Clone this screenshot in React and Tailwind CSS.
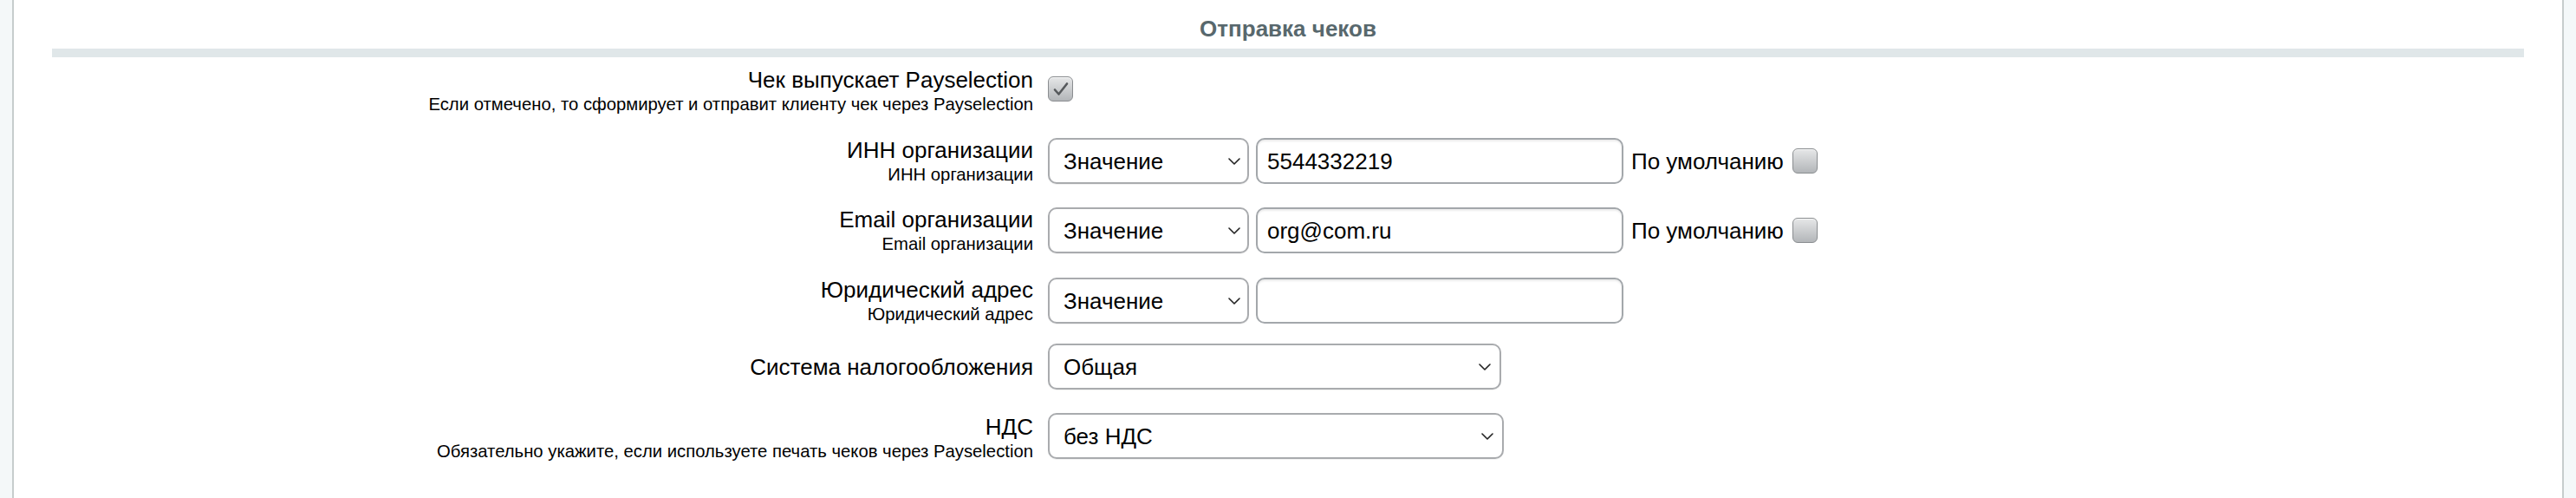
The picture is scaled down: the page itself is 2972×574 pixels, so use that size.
import React from 'react';

const font = { fontFamily: '"Liberation Sans", Arial, Helvetica, sans-serif' };

function Chevron({ className }) {
  return (
    <svg viewBox="0 0 14 8" className={className} fill="none" stroke="#222" strokeWidth="1.6" strokeLinecap="round" strokeLinejoin="round">
      <path d="M1 1l6 6 6-6" />
    </svg>
  );
}

function Checkbox({ checked }) {
  return (
    <div className="w-[29px] h-[29px] rounded-[6px] border border-[#8a8d90] bg-gradient-to-b from-[#e6e7e8] to-[#b3b6b9] shadow-[inset_0_1px_0_rgba(255,255,255,0.7)] flex items-center justify-center">
      {checked && (
        <svg viewBox="0 0 24 24" className="w-[24px] h-[24px]" fill="none" stroke="#56595c" strokeWidth="2.6" strokeLinecap="round" strokeLinejoin="round">
          <path d="M5 12.5l4.5 5L19 5.5" />
        </svg>
      )}
    </div>
  );
}

function FakeSelect({ value, width, chevronRight }) {
  return (
    <div className={`${width} h-[53px] shrink-0 rounded-[10px] border-2 border-[#a9abae] bg-white flex items-center justify-between pl-[16px] ${chevronRight} shadow-[0_1px_1px_rgba(0,0,0,0.06)]`}>
      <span className="text-[26px] leading-none text-black">{value}</span>
      <Chevron className="w-[14px] h-[8px]" />
    </div>
  );
}

function FakeInput({ value }) {
  return (
    <div className="w-[424px] h-[53px] shrink-0 rounded-[10px] border-2 border-[#a3a7ab] bg-white flex items-center pl-[11px] shadow-[inset_0_2px_2px_rgba(0,0,0,0.08)]">
      <span className="text-[26px] leading-none text-black">{value}</span>
    </div>
  );
}

function Label({ main, sub }) {
  return (
    <div className="w-[1132px] shrink-0 text-right text-black">
      <div className="text-[26px] leading-[28px]">{main}</div>
      {sub && <div className="text-[20.3px] leading-[22px] mt-[3px]">{sub}</div>}
    </div>
  );
}

function ValueRow({ main, sub, value, withDefault }) {
  return (
    <div className="flex items-start">
      <Label main={main} sub={sub} />
      <div className="ml-[17px] flex items-center">
        <FakeSelect value="Значение" width="w-[232px]" chevronRight="pr-[8px]" />
        <div className="ml-[8px]">
          <FakeInput value={value} />
        </div>
        {withDefault && (
          <div className="ml-[9px] flex items-center">
            <span className="text-[26px] leading-none text-black">По умолчанию</span>
            <div className="ml-[10px]">
              <Checkbox />
            </div>
          </div>
        )}
      </div>
    </div>
  );
}

export default function App() {
  return (
    <div style={font} className="w-[2972px] h-[574px] bg-[#f4f8f9] flex px-[14px] overflow-hidden">
      <div className="flex-1 bg-white border-x-2 border-[#c6cdcd] flex flex-col">
        <div className="h-[56px] flex items-center justify-center pt-[10px]">
          <h2 className="text-[26px] font-bold text-[#58686d] leading-none">Отправка чеков</h2>
        </div>
        <div className="mx-[44px] h-[10px] bg-[#e0e7e9]" />

        <div className="flex flex-col pl-[44px]">
          <div className="flex items-start mt-[12px]">
            <Label
              main="Чек выпускает Payselection"
              sub="Если отмечено, то сформирует и отправит клиенту чек через Payselection"
            />
            <div className="ml-[17px] mt-[10px]">
              <Checkbox checked />
            </div>
          </div>

          <div className="mt-[28px]">
            <ValueRow main="ИНН организации" sub="ИНН организации" value="5544332219" withDefault />
          </div>
          <div className="mt-[27px]">
            <ValueRow main="Email организации" sub="Email организации" value="org@com.ru" withDefault />
          </div>
          <div className="mt-[28px]">
            <ValueRow main="Юридический адрес" sub="Юридический адрес" value="" />
          </div>

          <div className="flex items-center mt-[23px]">
            <Label main="Система налогообложения" />
            <div className="ml-[17px]">
              <FakeSelect value="Общая" width="w-[523px]" chevronRight="pr-[10px]" />
            </div>
          </div>

          <div className="flex items-start mt-[27px]">
            <div className="pt-[2px]">
              <Label
                main="НДС"
                sub="Обязательно укажите, если используете печать чеков через Payselection"
              />
            </div>
            <div className="ml-[17px]">
              <FakeSelect value="без НДС" width="w-[526px]" chevronRight="pr-[10px]" />
            </div>
          </div>
        </div>
      </div>
    </div>
  );
}
